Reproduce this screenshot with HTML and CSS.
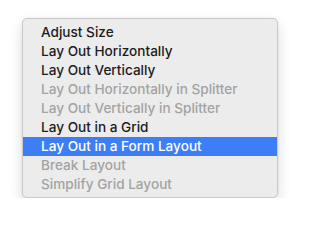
FILE: index.html
```html
<!DOCTYPE html>
<html>
<head>
<meta charset="utf-8">
<link rel="stylesheet" href="styles.css">
</head>
<body>
<div class="menu">
  <div class="item">Adjust Size</div>
  <div class="item">Lay Out Horizontally</div>
  <div class="item">Lay Out Vertically</div>
  <div class="item disabled">Lay Out Horizontally in Splitter</div>
  <div class="item disabled">Lay Out Vertically in Splitter</div>
  <div class="item">Lay Out in a Grid</div>
  <div class="item selected">Lay Out in a Form Layout</div>
  <div class="item disabled">Break Layout</div>
  <div class="item disabled">Simplify Grid Layout</div>
</div>
</body>
</html>
```

FILE: styles.css
```css
html, body {
  margin: 0;
  background: #ffffff;
}
body {
  padding: 18px 0 0 22px;
  font-family: "Inter", "Liberation Sans", sans-serif;
  font-size: 13.6px;
  font-weight: 500;
}
.menu {
  box-sizing: border-box;
  width: 256px;
  height: 180px;
  padding: 4px 0 4px 0;
  background: #ececec;
  border: 1px solid #c9c9c9;
  border-radius: 5px;
  box-shadow: 0 6px 14px rgba(0, 0, 0, 0.14), 0 0 3px rgba(0, 0, 0, 0.06);
}
.item {
  height: 19px;
  line-height: 19px;
  padding-left: 18px;
  color: #1c1c1c;
  white-space: nowrap;
}
.item.disabled {
  color: #a3a3a3;
}
.item.selected {
  background: #3d7ef6;
  color: #ffffff;
}
```
